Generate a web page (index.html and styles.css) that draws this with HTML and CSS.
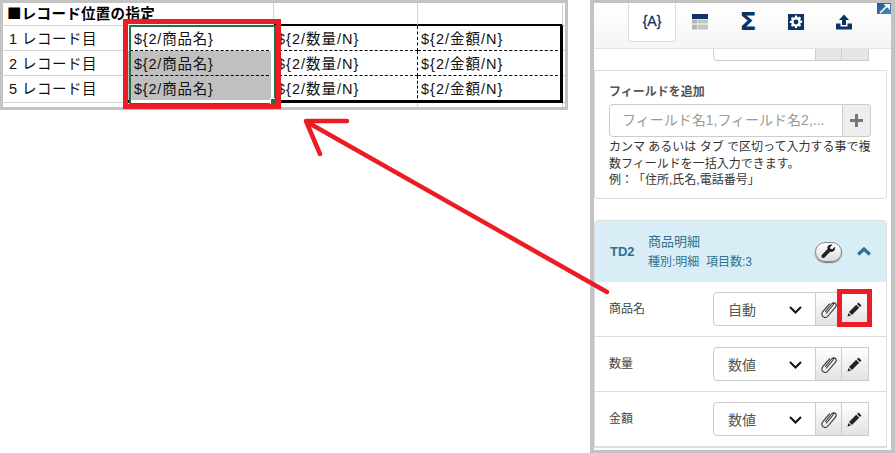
FILE: index.html
```html
<!DOCTYPE html>
<html lang="ja">
<head>
<meta charset="utf-8">
<title>レコード位置の指定</title>
<link rel="stylesheet" href="styles.css">
</head>
<body>
<section class="sheet">
  <div class="row row-head">
    <div class="cell title">■レコード位置の指定</div>
    <div class="cell c-c head-cell"></div>
    <div class="cell c-d head-cell"></div>
    <div class="cell c-e"></div>
  </div>
  <div class="row">
    <div class="cell c-a">1 レコード目</div>
    <div class="cell c-b">${2/商品名}</div>
    <div class="cell c-c dash">${2/数量/N}</div>
    <div class="cell c-d dash">${2/金額/N}</div>
    <div class="cell c-e"></div>
  </div>
  <div class="row">
    <div class="cell c-a">2 レコード目</div>
    <div class="cell c-b grey">${2/商品名}</div>
    <div class="cell c-c dash">${2/数量/N}</div>
    <div class="cell c-d dash">${2/金額/N}</div>
    <div class="cell c-e"></div>
  </div>
  <div class="row row-last">
    <div class="cell c-a">5 レコード目</div>
    <div class="cell c-b grey">${2/商品名}</div>
    <div class="cell c-c">${2/数量/N}</div>
    <div class="cell c-d">${2/金額/N}</div>
    <div class="cell c-e"></div>
  </div>
  <div class="row row-tail">
    <div class="cell c-a"></div>
    <div class="cell c-b"></div>
    <div class="cell c-c"></div>
    <div class="cell c-d"></div>
    <div class="cell c-e"></div>
  </div>
</section>

<aside class="panel">
  <nav class="tabs">
    <div class="tab active"><span class="brace">{A}</span></div>
    <div class="tab">
      <svg width="16" height="16" viewBox="0 0 16 16"><rect width="16" height="5" y="0" fill="#0c3464"/><rect width="5" height="4" y="5.500" fill="#b5b5b5"/><rect x="5.500" width="10.500" height="4" y="5.500" fill="#c4c4c4"/><rect width="5" height="5" y="10.500" fill="#b5b5b5"/><rect x="5.500" width="10.500" height="5" y="10.500" fill="#c4c4c4"/></svg>
    </div>
    <div class="tab"><span class="sigma">Σ</span></div>
    <div class="tab">
      <svg width="16" height="16" viewBox="0 0 16 16"><rect width="16" height="16" fill="#0c3464"/><path fill="#fff" fill-rule="evenodd" d="M7 1.500h2l.3 1.600 1 .4 1.400-.9 1.400 1.400-.9 1.400.4 1 1.600.3v2l-1.600.3-.4 1 .9 1.400-1.400 1.400-1.400-.9-1 .4-.3 1.600H7l-.3-1.600-1-.4-1.400.9-1.400-1.400.9-1.400-.4-1L1.800 9V7l1.600-.3.4-1-.9-1.400 1.400-1.400 1.400.9 1-.4zM8 5.600a2.400 2.400 0 1 0 0 4.800 2.400 2.400 0 0 0 0-4.800z"/></svg>
    </div>
    <div class="tab">
      <svg width="16" height="16" viewBox="0 0 16 16"><path fill="#0c3464" d="M8 .5 13 6H10v5H6V6H3z"/><path fill="#0c3464" d="M0 9.500h4.500V12.500h7V9.500H16V15.500H0z"/></svg>
    </div>
    <span class="popout">
      <svg width="14" height="11" viewBox="0 0 14 11"><path fill="none" stroke="#fff" stroke-width="1.600" d="M3 10 10 3"/><path fill="#fff" d="M6.500 1H13V7z"/></svg>
    </span>
  </nav>

  <div class="stub">
    <div class="controls stub-controls">
      <div class="select"></div>
      <div class="btn"></div>
      <div class="btn btn-end"></div>
    </div>
  </div>

  <div class="add-card">
    <h3 class="add-title">フィールドを追加</h3>
    <div class="add-group">
      <div class="add-input">フィールド名1,フィールド名2,...</div>
      <div class="add-btn">
        <svg width="13" height="13" viewBox="0 0 13 13"><path fill="#777" d="M5 0h3v5h5v3H8v5H5V8H0V5h5z"/></svg>
      </div>
    </div>
    <p class="help">カンマ あるいは タブ で区切って入力する事で複数フィールドを一括入力できます。<br>例：「住所,氏名,電話番号」</p>
  </div>

  <div class="td-card">
    <header class="td-head">
      <span class="td-id">TD2</span>
      <div class="td-info">
        <div class="td-name">商品明細</div>
        <div class="td-sub">種別:明細&nbsp; 項目数:3</div>
      </div>
      <span class="wrench">
        <svg width="15" height="15" viewBox="0 0 15 15"><path fill="#222" d="M14 2.800 11.300 5.300 9.500 5 9 3.200 11.500.8C9.400 0 7 .8 6.500 3c-.2.800-.1 1.400.1 2L1 10.700c-.8.800-.8 1.900-.1 2.700.8.700 1.900.7 2.600 0L9.200 7.800c2.400.6 5.600-1.400 4.800-5z"/></svg>
      </span>
      <svg class="chev-up" width="14" height="9" viewBox="0 0 14 9"><path fill="none" stroke="#31708f" stroke-width="3.200" d="M1.200 7.500 7 2l5.800 5.500"/></svg>
    </header>

    <div class="field">
      <span class="field-name">商品名</span>
      <div class="controls">
        <div class="select">自動<svg class="chev" width="13" height="8" viewBox="0 0 13 8"><path fill="none" stroke="#111" stroke-width="2" d="M1 1l5.500 5.500L12 1"/></svg></div>
        <div class="btn"><svg width="17" height="17" viewBox="0 0 17 17"><use href="#clip"/></svg></div>
        <div class="btn btn-end"><svg width="16" height="16" viewBox="0 0 16 16"><use href="#pencil"/></svg></div>
      </div>
    </div>
    <div class="field">
      <span class="field-name">数量</span>
      <div class="controls">
        <div class="select">数値<svg class="chev" width="13" height="8" viewBox="0 0 13 8"><path fill="none" stroke="#111" stroke-width="2" d="M1 1l5.500 5.500L12 1"/></svg></div>
        <div class="btn"><svg width="17" height="17" viewBox="0 0 17 17"><use href="#clip"/></svg></div>
        <div class="btn btn-end"><svg width="16" height="16" viewBox="0 0 16 16"><use href="#pencil"/></svg></div>
      </div>
    </div>
    <div class="field">
      <span class="field-name">金額</span>
      <div class="controls">
        <div class="select">数値<svg class="chev" width="13" height="8" viewBox="0 0 13 8"><path fill="none" stroke="#111" stroke-width="2" d="M1 1l5.500 5.500L12 1"/></svg></div>
        <div class="btn"><svg width="17" height="17" viewBox="0 0 17 17"><use href="#clip"/></svg></div>
        <div class="btn btn-end"><svg width="16" height="16" viewBox="0 0 16 16"><use href="#pencil"/></svg></div>
      </div>
    </div>
  </div>
</aside>

<svg class="defs" width="0" height="0">
  <defs>
    <path id="clip" fill="none" stroke="#333" stroke-width="1.100" stroke-linecap="round" d="M5.500 10.500 11.500 3c1-1.300 3-1.500 4-.5s.8 2.600-.2 3.800L8 15c-1.300 1.500-3.500 1.800-5 .6s-1.500-3.400-.2-5L9.500 2.800M6.500 12l6.500-8c.6-.7.6-1 .2-1.300"/>
    <path id="pencil" fill="#222" d="M11.500 1.500 14.500 4.500 13 6 10 3zM9.200 3.800 12.200 6.800 5 14 2 11zM1.500 12 4 14.500.500 15.500z"/>
  </defs>
</svg>

<div class="selection"><span class="handle"></span></div>
<div class="callout callout-range"></div>
<div class="callout callout-btn"></div>
<svg class="arrow" width="895" height="453" viewBox="0 0 895 453">
  <path fill="none" stroke="#ed1c24" stroke-width="4.500" stroke-linecap="round" stroke-linejoin="round" d="M347 121H306L320 154M307 122 607 292"/>
</svg>
</body>
</html>
```

FILE: styles.css
```css
* { box-sizing: border-box; }
html, body { margin: 0; padding: 0; }
body {
  width: 895px;
  height: 453px;
  overflow: hidden;
  position: relative;
  display: flex;
  justify-content: space-between;
  align-items: flex-start;
  background: #fff;
  font-family: "Liberation Sans", "Noto Sans CJK JP", sans-serif;
  color: #333;
  text-spacing-trim: space-all;
}

/* spreadsheet */
.sheet {
  width: 568px;
  height: 110px;
  border: 3px solid #c3c3c3;
  background: #fff;
  font-size: 14.500px;
  color: #111;
}
.row {
  display: grid;
  grid-template-columns: 122px 149px 144px 145px 2px;
  height: 25px;
}
.row-head { grid-template-columns: 271px 144px 145px 2px; height: 23px; }
.row-last { height: 27px; }
.row-tail { height: 4px; }
.cell {
  border-bottom: 1px solid #d4d4d4;
  padding: 1px 0 0 6px;
  line-height: 24px;
  letter-spacing: 1px;
  white-space: nowrap;
  overflow: hidden;
}
.title {
  font-family: "Noto Sans CJK JP", sans-serif;
  font-weight: 700;
  padding: 0 0 0 4px;
  color: #000;
  line-height: 20px;
  letter-spacing: .3px;
  border-right: 1px solid #d4d4d4;
}
.c-a { letter-spacing: .5px; }
.c-b { padding-left: 9px; letter-spacing: .8px; border-bottom: 1px dashed #000; }
.c-c { padding-left: 3px; border-right: 1px dashed #000; }
.c-d { padding-left: 3px; border-right: 3px solid #000; }
.c-e { padding: 0; }
.dash { border-bottom: 1px dashed #000; }
.grey { background: #c0c0c0; }

.row-head .c-c { border-right: 1px solid #d4d4d4; }
.row-head .c-d { border-right: 1px solid #d4d4d4; }
.head-cell { border-bottom: 2px solid #000; }
.row-last .c-b, .row-last .c-c, .row-last .c-d { border-bottom: 3px solid #000; }
.row-tail .cell { border-bottom: 0; }
.row-tail .c-c, .row-tail .c-d { border-right: 1px solid #d4d4d4; }

/* panel */
.panel {
  width: 305px;
  height: 453px;
  border: solid #c3c3c3;
  border-width: 3px 4px;
  background: #fff;
  overflow: hidden;
  font-size: 12px;
}
.tabs {
  position: relative;
  height: 46px;
  display: flex;
  padding-left: 34px;
  background: linear-gradient(#fff, #f5f5f5);
  border-bottom: 1px solid #e4e4e4;
}
.tab {
  width: 48px;
  height: 39px;
  display: flex;
  align-items: flex-start;
  justify-content: center;
  padding-top: 11px;
  color: #0c3464;
}
.tab.active {
  background: #fff;
  border: 1px solid #ddd;
  border-top: 0;
  border-radius: 0 0 4px 4px;
  padding-top: 9px;
}
.brace { font: 400 14px/18px "Liberation Sans", sans-serif; -webkit-text-stroke: .3px #0c3464; }
.sigma { font: 700 25px/16px "DejaVu Sans", sans-serif; }
.popout {
  position: absolute;
  top: 0;
  right: 0;
  width: 14px;
  height: 11px;
  display: block;
  background: linear-gradient(135deg, #1f5a96, #4f86bd);
  line-height: 0;
}

.stub {
  height: 22px;
  margin-right: 4px;
  padding-left: 119px;
  border-bottom: 1px solid #ddd;
  overflow: hidden;
}
.controls { display: flex; height: 34px; }
.stub-controls { margin-top: -22px; }

.select {
  width: 103px;
  height: 34px;
  display: flex;
  align-items: center;
  padding-left: 14px;
  border: 1px solid #ccc;
  border-radius: 4px 0 0 4px;
  background: #fff;
  font-size: 14px;
  color: #555;
  position: relative;
}
.chev { position: absolute; right: 13px; top: 13px; }
.btn {
  width: 26px;
  height: 34px;
  display: flex;
  align-items: center;
  justify-content: center;
  border: 1px solid #ccc;
  border-left: 0;
  background: linear-gradient(#fff, #e2e2e2);
}
.btn-end { width: 27px; }
.stub .btn { background: #e6e6e6; }

.add-card {
  height: 128px;
  margin-right: 4px;
  padding: 11px 14px 0;
  border: solid #ddd;
  border-width: 0 1px 1px;
  border-radius: 0 0 4px 4px;
}
.add-title { margin: 0 0 2px; font-size: 12px; line-height: 20px; font-weight: 700; color: #555; }
.add-group { display: flex; height: 33px; }
.add-input {
  width: 234px;
  padding-left: 12px;
  border: 1px solid #ccc;
  border-radius: 4px 0 0 4px;
  font-size: 14px;
  line-height: 31px;
  color: #999;
  white-space: nowrap;
  overflow: hidden;
}
.add-btn {
  width: 28px;
  display: flex;
  align-items: center;
  justify-content: center;
  background: #eee;
  border: 1px solid #ccc;
  border-left: 0;
  border-radius: 0 4px 4px 0;
}
.help { margin: 2px 0 0; width: 264px; font-size: 12px; line-height: 16.500px; color: #333; }

.td-card {
  margin: 21px 4px 0 0;
  border: 1px solid #ddd;
  border-radius: 4px 4px 0 0;
}
.td-head {
  height: 61px;
  display: flex;
  align-items: center;
  padding: 0 15px;
  background: #d9edf7;
  color: #31708f;
}
.td-id { width: 38px; font-size: 13px; font-weight: 700; }
.td-info { width: 167px; }
.td-name { font-size: 13px; line-height: 20px; }
.td-sub { font-size: 12px; line-height: 18px; margin-top: 1px; }
.wrench {
  width: 27px;
  height: 20px;
  display: flex;
  align-items: center;
  justify-content: center;
  border-radius: 10px;
  border: 1px solid #888;
  background: linear-gradient(#fff, #ddd);
  box-shadow: 0 1px 1px #777;
}
.chev-up { margin-left: 15px; }
.field {
  height: 55px;
  display: flex;
  align-items: center;
  justify-content: space-between;
  padding: 0 17px 0 14px;
  border-bottom: 1px solid #ddd;
}
.field-name { font-size: 12px; line-height: 16px; color: #444; }

.defs { position: absolute; }

/* annotation overlays */
.selection {
  position: absolute;
  left: 129px;
  top: 25px;
  width: 147px;
  height: 80px;
  border: 2px solid #217346;
  box-shadow: inset -3px -3px 0 #fff;
}
.handle {
  position: absolute;
  right: -2px;
  bottom: -2px;
  width: 5px;
  height: 6px;
  background: #217346;
  box-shadow: -1px -1px 0 #fff;
}
.callout { position: absolute; border-style: solid; border-color: #ed1c24; }
.callout-range { left: 123px; top: 19px; width: 158px; height: 90px; border-width: 5px; }
.callout-btn { left: 837px; top: 289px; width: 35px; height: 38px; border-width: 5px; }
.arrow { position: absolute; left: 0; top: 0; pointer-events: none; }
```
